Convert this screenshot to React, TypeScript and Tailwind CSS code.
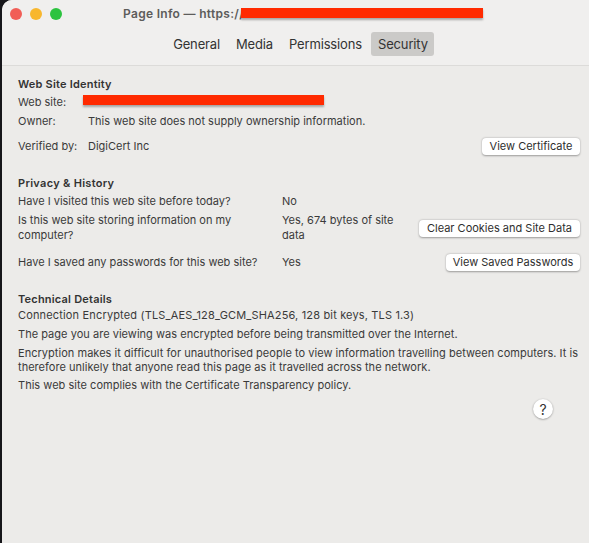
import React from 'react';

const Redaction = ({ className }: { className: string }) => (
  <div className={`absolute h-[10px] bg-[#ff2a00] shadow-[0_2px_2px_rgba(0,0,0,0.3)] ${className}`} />
);

const MacButton = ({ label, width }: { label: string; width: string }) => (
  <button className={`${width} h-[17px] bg-white rounded-[4px] shadow-[0_0.5px_2px_rgba(0,0,0,0.35)] text-[11px] leading-[17px] text-[#2e2e2e] text-center whitespace-nowrap`}>
    {label}
  </button>
);

const tabs = [
  { name: 'General', active: false },
  { name: 'Media', active: false },
  { name: 'Permissions', active: false },
  { name: 'Security', active: true },
];

const App: React.FC = () => {
  return (
    <div className="w-[589px] h-[543px] bg-[#16161a] overflow-hidden pl-[2px] font-['Inter','Liberation_Sans',sans-serif]">
      <div className="relative h-full bg-[#ecebe9] rounded-tl-[10px] overflow-hidden text-[#3a3a3a]">
        {/* title bar + tabs */}
        <div className="h-[66px] bg-[#f0efee] border-b border-[#dcdbd9] flex flex-col">
          <div className="h-[28px] flex items-center pl-[8px] relative">
            <div className="flex gap-[8px]">
              <div className="w-3 h-3 rounded-full bg-[#f15e56]" />
              <div className="w-3 h-3 rounded-full bg-[#f8b72e]" />
              <div className="w-3 h-3 rounded-full bg-[#2cc33f]" />
            </div>
            <span className="ml-[61px] text-[12px] font-semibold tracking-[0.3px] text-[#5d5c5b] whitespace-nowrap">Page Info — https://</span>
          </div>
          <div className="flex justify-center items-center gap-[3px] pt-[4px] pl-[9px] text-[13px] tracking-[-0.15px] text-[#333]">
            {tabs.map((t) => (
              <div
                key={t.name}
                className={`h-6 pl-[7px] pr-[6px] leading-6 rounded-[3px] ${t.active ? 'bg-[#cbcac8]' : ''}`}
              >
                {t.name}
              </div>
            ))}
          </div>
        </div>

        {/* details */}
        <div className="pl-4 pr-[9px] text-[11px] leading-[15px]">
          <section className="pt-[11px]">
            <h2 className="font-semibold tracking-[0.2px] text-[#333] leading-[15px]">Web Site Identity</h2>
            <div className="flex h-[20px] items-center pt-[1px]">
              <span className="w-[70px]">Web site:</span>
            </div>
            <div className="flex h-[18px] items-center">
              <span className="w-[70px]">Owner:</span>
              <span>This web site does not supply ownership information.</span>
            </div>
            <div className="flex h-[17px] mt-[8px] items-center">
              <span className="w-[70px]">Verified by:</span>
              <span>DigiCert Inc</span>
              <div className="ml-auto"><MacButton label="View Certificate" width="w-[98px]" /></div>
            </div>
          </section>

          <section className="pt-[21px]">
            <h2 className="font-semibold tracking-[0.3px] text-[#333]">Privacy &amp; History</h2>
            <div className="flex items-center h-[20px]">
              <span className="w-[264px]">Have I visited this web site before today?</span>
              <span>No</span>
            </div>
            <div className="flex items-center h-[34px]">
              <span className="w-[264px]">Is this web site storing information on my computer?</span>
              <span className="w-[134px]">Yes, 674 bytes of site data</span>
              <div className="ml-auto"><MacButton label="Clear Cookies and Site Data" width="w-[161px]" /></div>
            </div>
            <div className="flex items-center h-[33px] pt-[1px]">
              <span className="w-[264px]">Have I saved any passwords for this web site?</span>
              <span>Yes</span>
              <div className="ml-auto"><MacButton label="View Saved Passwords" width="w-[134px]" /></div>
            </div>
          </section>

          <section className="pt-[14px]">
            <h2 className="font-semibold tracking-[0.2px] text-[#333]">Technical Details</h2>
            <p className="mt-[1px] tracking-[0.16px]">Connection Encrypted (TLS_AES_128_GCM_SHA256, 128 bit keys, TLS 1.3)</p>
            <p className="mt-[4px] tracking-[0.03px]">The page you are viewing was encrypted before being transmitted over the Internet.</p>
            <p className="mt-[4px] leading-[14px] tracking-[0.035px]">Encryption makes it difficult for unauthorised people to view information travelling between computers. It is therefore unlikely that anyone read this page as it travelled across the network.</p>
            <p className="mt-[4px] tracking-[0.03px]">This web site complies with the Certificate Transparency policy.</p>
          </section>

          <div className="flex justify-end pr-[27px] mt-[6px]">
            <div className="w-5 h-5 rounded-full bg-white shadow-[0_0.5px_2px_rgba(0,0,0,0.4)] flex items-center justify-center text-[14px] text-[#333]">?</div>
          </div>
        </div>

        <Redaction className="left-[239px] top-[8px] w-[242px]" />
        <Redaction className="left-[81px] top-[95px] w-[241px]" />
      </div>
    </div>
  );
};

export default App;
